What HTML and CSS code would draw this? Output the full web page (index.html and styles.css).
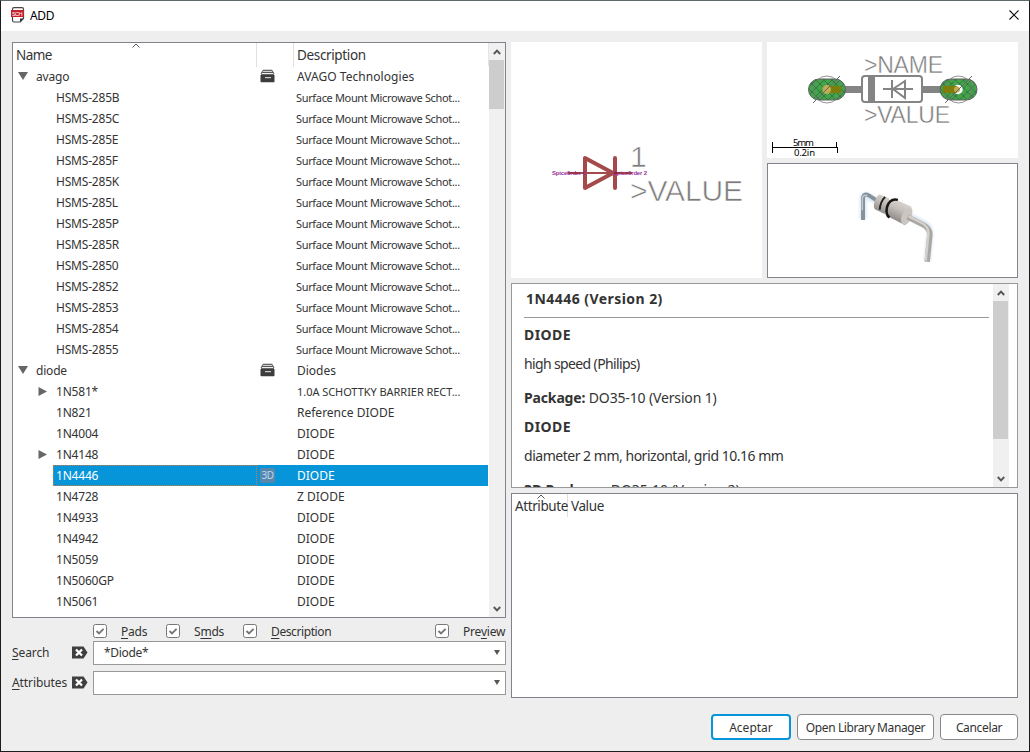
FILE: index.html
```html
<!DOCTYPE html>
<html lang="es">
<head>
<meta charset="utf-8">
<title>ADD</title>
<link rel="stylesheet" href="styles.css">
</head>
<body>
<svg class="defs" width="0" height="0">
  <defs>
    <symbol id="drawer" viewBox="0 0 15 14">
      <path d="M3 1.500h9" stroke="#666" stroke-width="1.600"/>
      <path d="M1.800 3.500h11.400M1 5.400h13" stroke="#555" stroke-width="1"/>
      <path d="M3 1.200L1 5M12 1.200l2 3.800" stroke="#555"/>
      <path d="M.5 6h14v6.500q0 .7-.7.7H1.200q-.7 0-.7-.7z" fill="#3c3c3c"/>
      <path d="M5 8.600h6" stroke="#ccc" stroke-width="1.200"/>
    </symbol>
    <symbol id="up" viewBox="0 0 8 6"><path d="M.8 5L4 1.600 7.200 5" fill="none" stroke="#555" stroke-width="1.900"/></symbol>
    <symbol id="down" viewBox="0 0 8 6"><path d="M.8 1L4 4.400 7.200 1" fill="none" stroke="#555" stroke-width="1.900"/></symbol>
    <symbol id="sort" viewBox="0 0 8 5"><path d="M.5 4.500L4 1l3.500 3.500" fill="none" stroke="#555" stroke-width="1"/></symbol>
    <symbol id="open" viewBox="0 0 10 8"><path d="M0 0h10L5 8z" fill="#666"/></symbol>
    <symbol id="closed" viewBox="0 0 9 9"><path d="M.5 0v9L9 4.500z" fill="#666"/></symbol>
    <symbol id="clear" viewBox="0 0 16 13"><path d="M0 .5h11.500L15.500 6.500l-4 6H0z" fill="#3f3f3f"/><path d="M4 3.500l6 6M10 3.500l-6 6" stroke="#fff" stroke-width="2.300"/></symbol>
    <symbol id="check" viewBox="0 0 14 14"><rect x=".5" y=".5" width="13" height="13" rx="2" fill="#fff" stroke="#777"/><path d="M3.500 7l2.500 2.500 4.600-4.700" fill="none" stroke="#777" stroke-width="1.900"/></symbol>
    <symbol id="arrow" viewBox="0 0 6 5"><path d="M0 0h6L3 5z" fill="#555"/></symbol>
    <pattern id="hatch" width="8" height="8" patternUnits="userSpaceOnUse"><path d="M0 0l8 8M8 0L0 8" stroke="#357447" stroke-width="1"/></pattern>
  </defs>
</svg>
<div class="window">
  <header class="titlebar">
    <svg class="app-icon" viewBox="0 0 14 16"><path d="M3 .7h8q1.500 0 1.500 1.500v9.300L9.300 15H3q-1.500 0-1.500-1.500V2.200Q1.500.7 3 .7z" fill="#fff" stroke="#444" stroke-width="1.200"/><path d="M9 15v-3.500h3.500z" fill="#333"/><rect x="0" y="3" width="13" height="7" fill="#c5222c"/><text x="1" y="8.800" class="sch" textLength="10.500">SCH</text></svg>
    <span class="title">ADD</span>
    <svg class="close" viewBox="0 0 10 10"><path d="M.5.5l9 9M9.500.5l-9 9" stroke="#111" stroke-width="1.100"/></svg>
  </header>
  <main class="content">
    <section class="left">
      <div class="library">
        <div class="tree">
          <div class="row head"><span class="name">Name<svg class="sort"><use href="#sort"/></svg></span><span class="kind"></span><span class="desc">Description</span></div>
          <div class="row lib"><span class="name"><svg class="open"><use href="#open"/></svg>avago</span><span class="kind"><svg class="drawer"><use href="#drawer"/></svg></span><span class="desc wide">AVAGO Technologies</span></div>
          <div class="row"><span class="name">HSMS-285B</span><span class="kind"></span><span class="desc small">Surface Mount Microwave Schot...</span></div>
          <div class="row"><span class="name">HSMS-285C</span><span class="kind"></span><span class="desc small">Surface Mount Microwave Schot...</span></div>
          <div class="row"><span class="name">HSMS-285E</span><span class="kind"></span><span class="desc small">Surface Mount Microwave Schot...</span></div>
          <div class="row"><span class="name">HSMS-285F</span><span class="kind"></span><span class="desc small">Surface Mount Microwave Schot...</span></div>
          <div class="row"><span class="name">HSMS-285K</span><span class="kind"></span><span class="desc small">Surface Mount Microwave Schot...</span></div>
          <div class="row"><span class="name">HSMS-285L</span><span class="kind"></span><span class="desc small">Surface Mount Microwave Schot...</span></div>
          <div class="row"><span class="name">HSMS-285P</span><span class="kind"></span><span class="desc small">Surface Mount Microwave Schot...</span></div>
          <div class="row"><span class="name">HSMS-285R</span><span class="kind"></span><span class="desc small">Surface Mount Microwave Schot...</span></div>
          <div class="row"><span class="name">HSMS-2850</span><span class="kind"></span><span class="desc small">Surface Mount Microwave Schot...</span></div>
          <div class="row"><span class="name">HSMS-2852</span><span class="kind"></span><span class="desc small">Surface Mount Microwave Schot...</span></div>
          <div class="row"><span class="name">HSMS-2853</span><span class="kind"></span><span class="desc small">Surface Mount Microwave Schot...</span></div>
          <div class="row"><span class="name">HSMS-2854</span><span class="kind"></span><span class="desc small">Surface Mount Microwave Schot...</span></div>
          <div class="row"><span class="name">HSMS-2855</span><span class="kind"></span><span class="desc small">Surface Mount Microwave Schot...</span></div>
          <div class="row lib"><span class="name"><svg class="open"><use href="#open"/></svg>diode</span><span class="kind"><svg class="drawer"><use href="#drawer"/></svg></span><span class="desc">Diodes</span></div>
          <div class="row group"><span class="name"><svg class="closed"><use href="#closed"/></svg>1N581*</span><span class="kind"></span><span class="desc caps">1.0A SCHOTTKY BARRIER RECT...</span></div>
          <div class="row"><span class="name">1N821</span><span class="kind"></span><span class="desc">Reference DIODE</span></div>
          <div class="row"><span class="name">1N4004</span><span class="kind"></span><span class="desc">DIODE</span></div>
          <div class="row group"><span class="name"><svg class="closed"><use href="#closed"/></svg>1N4148</span><span class="kind"></span><span class="desc">DIODE</span></div>
          <div class="row selected"><span class="name">1N4446</span><span class="kind"><b class="badge">3D</b></span><span class="desc">DIODE</span></div>
          <div class="row"><span class="name">1N4728</span><span class="kind"></span><span class="desc">Z DIODE</span></div>
          <div class="row"><span class="name">1N4933</span><span class="kind"></span><span class="desc">DIODE</span></div>
          <div class="row"><span class="name">1N4942</span><span class="kind"></span><span class="desc">DIODE</span></div>
          <div class="row"><span class="name">1N5059</span><span class="kind"></span><span class="desc">DIODE</span></div>
          <div class="row"><span class="name">1N5060GP</span><span class="kind"></span><span class="desc">DIODE</span></div>
          <div class="row"><span class="name">1N5061</span><span class="kind"></span><span class="desc">DIODE</span></div>
        </div>
        <div class="scrollbar"><svg><use href="#up"/></svg><i class="thumb"></i><svg class="end"><use href="#down"/></svg></div>
      </div>
      <div class="filters">
        <label class="f-pads"><svg class="check"><use href="#check"/></svg><span><u>P</u>ads</span></label>
        <label class="f-smds"><svg class="check"><use href="#check"/></svg><span>S<u>m</u>ds</span></label>
        <label class="f-desc"><svg class="check"><use href="#check"/></svg><span><u>D</u>escription</span></label>
        <label class="f-prev"><svg class="check"><use href="#check"/></svg><span>Pre<u>v</u>iew</span></label>
      </div>
      <div class="field"><span class="label"><u>S</u>earch</span><svg class="clear"><use href="#clear"/></svg><div class="combo">*Diode*<svg class="arrow"><use href="#arrow"/></svg></div></div>
      <div class="field"><span class="label"><u>A</u>ttributes</span><svg class="clear"><use href="#clear"/></svg><div class="combo"><svg class="arrow"><use href="#arrow"/></svg></div></div>
    </section>
    <section class="right">
      <div class="previews">
        <svg class="symbol" viewBox="511 42 251 236">
          <g fill="none" stroke="#a54a4a" stroke-width="4" stroke-linecap="round" stroke-linejoin="round"><path d="M585 158v30l28-15zM615 158v30"/></g>
          <path d="M586 173h27" stroke="#a54a4a" stroke-width="2"/>
          <text class="pin" x="552" y="175" textLength="34">Spice0rder 1</text>
          <text class="pin" x="613" y="175" textLength="34">Spice0rder 2</text>
          <path d="M568 173h16M614 173h18" stroke="#8b1a2a" stroke-width="1.700"/>
          <text class="cad big" x="630" y="167" textLength="17">1</text>
          <text class="cad big" x="630" y="201" textLength="113">&gt;VALUE</text>
        </svg>
        <div class="physical">
          <svg class="package" viewBox="767 42 251 116">
            <path d="M843 89.500h20M922 89.500h20" stroke="#848484" stroke-width="7"/>
            <g id="pad">
              <rect x="808.500" y="79" width="37" height="21" rx="10.500" fill="#43a547"/>
              <rect x="808.500" y="79" width="37" height="21" rx="10.500" fill="url(#hatch)" stroke="#606060"/>
              <circle cx="827" cy="89.500" r="13.500" fill="none" stroke="#777" stroke-width=".8"/>
            </g>
            <use href="#pad" x="131.500"/>
            <circle cx="827" cy="89.500" r="4.500" fill="#c1ad52"/><path d="M827 86h14v7h-14z" fill="#7f7e0a"/><circle cx="827.500" cy="89.500" r="3.500" fill="#c1ad52"/>
            <circle cx="958" cy="89.500" r="4.700" fill="#fff"/><path d="M943 86h14v7h-14z" fill="#7f7e0a"/><circle cx="957" cy="89.500" r="3" fill="#c1ad52"/>
            <path d="M813 103l27-27M945 103l27-27" stroke="#666"/>
            <g fill="none" stroke="#848484" stroke-width="2"><rect x="862" y="76" width="60" height="26" rx="3"/><path d="M883 89h30M892 80v18M905 81v17l-12-9z"/></g>
            <path d="M868 76h7v26h-7z" fill="#848484"/>
            <text class="cad name" x="864" y="73" textLength="79">&gt;NAME</text>
            <text class="cad name" x="864" y="123" textLength="86">&gt;VALUE</text>
            <path d="M772.500 142v11M836.500 142v5M837.500 147v6M772 147.500h66" stroke="#000" fill="none"/>
            <text class="scale" x="793" y="146" textLength="21">5mm</text>
            <text class="scale" x="794" y="156" textLength="21">0.2in</text>
          </svg>
          <svg class="model" viewBox="767 163 251 115">
            <defs>
              <linearGradient id="body" gradientUnits="userSpaceOnUse" x1="899" y1="199" x2="890" y2="218"><stop offset="0" stop-color="#dad6d2"/><stop offset=".45" stop-color="#c3beba"/><stop offset="1" stop-color="#8f8986"/></linearGradient>
              <filter id="halo" x="-20%" y="-20%" width="140%" height="140%"><feGaussianBlur stdDeviation="1"/></filter>
              <filter id="soft" x="-10%" y="-10%" width="120%" height="120%"><feGaussianBlur stdDeviation=".5"/></filter>
            </defs>
            <path d="M862.500 219v-20q0-6 6-2.500l42 20 15 8q5.500 3 5 10l-2.500 27" fill="none" stroke="#dce8f4" stroke-width="7" filter="url(#halo)"/>
            <g filter="url(#soft)" fill="none">
              <path d="M862.500 220v-21q0-7 6-4l7 4.500" stroke="#87919a" stroke-width="4"/>
              <path d="M861.800 210v-11q0-5 5-4" stroke="#c2c9d0" stroke-width="1.500"/>
              <path d="M879.500 194l10 4-5 16-10-5q-2-3 0-8 2-6 5-7z" fill="url(#body)"/>
              <path d="M894 198.500l17 7.500q3 3 1 10-2 7-7 9l-17-8.500q-3-3 0-10 2-7 6-8z" fill="url(#body)"/>
              <ellipse cx="906.800" cy="216.500" rx="4.800" ry="8.800" transform="rotate(23 906.800 216.500)" fill="#cbc6c2"/>
              <path d="M885 196.500q-5 5-5.500 13" stroke="#222" stroke-width="2"/>
              <path d="M898 199.500q-8-2-11 7-2 8 2.500 11" stroke="#151515" stroke-width="2.600"/>
              <path d="M908 217l15 7.500q8 4 7.500 11l-2.700 27" stroke="#aaa6a2" stroke-width="5.500"/>
              <path d="M909 216.300l14 7q6.500 4 6 11l-2.700 27" stroke="#d4d0cc" stroke-width="2.500"/>
            </g>
          </svg>
        </div>
      </div>
      <div class="details">
        <div class="doc">
          <h1>1N4446 (Version 2)</h1>
          <h2>DIODE</h2>
          <p class="p1">high speed (Philips)</p>
          <p class="p2"><b>Package:</b> DO35-10 (Version 1)</p>
          <h2 class="h2b">DIODE</h2>
          <p class="p3">diameter 2 mm, horizontal, grid 10.16 mm</p>
          <p class="p4"><b>3D Package:</b> DO35-10 (Version 2)</p>
        </div>
        <div class="scrollbar doc-scroll"><svg><use href="#up"/></svg><i class="thumb"></i><svg class="end"><use href="#down"/></svg></div>
      </div>
      <div class="attributes"><span class="attr">Attribute<svg class="sort"><use href="#sort"/></svg></span><span class="value">Value</span></div>
    </section>
  </main>
  <footer class="buttons"><button class="primary">Aceptar</button><button class="manager">Open Library Manager</button><button class="cancel">Cancelar</button></footer>
</div>
</body>
</html>
```
FILE: styles.css
```css
* { box-sizing: border-box; }
body { margin: 0; font: 12px/21px "Noto Sans", sans-serif; color: #333; }
svg { display: block; flex: none; }
.defs { position: absolute; }
.window { width: 1030px; height: 752px; display: flex; flex-direction: column; background: #eee; border: 1px solid #1c1c1c; border-top-color: #5f686b; overflow: hidden; }
.titlebar { height: 30px; flex: none; display: flex; align-items: center; background: #fff; padding: 0 10px 2px; color: #000; }
.app-icon { width: 14px; height: 16px; }
.sch { font: 5.500px "Liberation Sans", sans-serif; fill: #fff; }
.title { margin-left: 5px; letter-spacing: -.4px; }
.close { width: 10px; height: 10px; margin-left: auto; }
.content { display: grid; grid-template-columns: 494px 507px; gap: 5px; padding: 11px 11px 0; height: 667px; flex: none; }
.library { display: flex; height: 576px; border: 1px solid #7f838c; background: #fff; }
.tree { width: 476px; }
.row { display: grid; grid-template-columns: 204px 36px 1fr; height: 21px; padding-left: 40px; white-space: nowrap; }
.name { padding-left: 3px; letter-spacing: -.2px; }
.desc { padding-left: 4px; }
.small { font-size: 11px; padding-left: 3px; letter-spacing: -.34px; }
.caps { font-size: 11px; letter-spacing: -.05px; }
.wide { letter-spacing: .05px; }
.head { height: 23px; padding-left: 0; grid-template-columns: 244px 37px 1fr; font-size: 13.500px; line-height: 24px; border-right: 1px solid #e5e5e5; }
.head .name { position: relative; border-right: 1px solid #e0e0e0; letter-spacing: -.6px; }
.head .kind { border-right: 1px solid #e0e0e0; }
.head .desc { padding-left: 3px; letter-spacing: -.35px; }
.sort { position: absolute; top: 0; left: 119px; width: 8px; height: 5px; }
.lib { padding-left: 5px; grid-template-columns: 239px 36px 1fr; }
.lib .name, .group .name { display: flex; align-items: center; padding-left: 0; }
.open { width: 10px; height: 8px; margin: 0 8px 2px 0; }
.group { padding-left: 26px; grid-template-columns: 218px 36px 1fr; }
.closed { width: 9px; height: 9px; margin: 0 9px 0 -1px; }
.kind { display: flex; align-items: center; }
.drawer { width: 15px; height: 14px; margin: 0 0 2px 3px; }
.selected { margin-left: 40px; padding-left: 0; background: #0795d9; color: #fff; margin-right: 1px; }
.selected .name { outline: 1px dotted #d5763f; outline-offset: -1px; }
.badge { width: 15px; height: 15px; margin-left: 3px; border-radius: 2px; background: #5787ac; color: #b9d9ef; font: 10px/15px "Noto Sans", sans-serif; text-align: center; letter-spacing: -.5px; }
.scrollbar { width: 16px; background: #f0f0f0; display: flex; flex-direction: column; align-items: center; padding: 6px 1px 5px 0; }
.scrollbar svg { width: 8px; height: 6px; }
.thumb { width: 15px; height: 49px; margin-top: 5px; background: #cdcdcd; }
.end { margin-top: auto; }
.filters { display: flex; height: 22px; padding: 3px 0 0 81px; }
.filters label { display: flex; height: 21px; align-items: center; }
.filters span { letter-spacing: -.2px; }
.check { width: 14px; height: 14px; margin: -2px 14px 0 0; }
.filters u, .label u { text-underline-offset: 2px; }
.f-pads { width: 73px; }
.f-smds { width: 77px; }
.f-desc { width: 192px; }
.filters .f-desc span { letter-spacing: -.4px; }
.f-prev { white-space: nowrap; }
.field { display: flex; align-items: center; height: 25px; margin-bottom: 5px; }
.label { width: 60px; white-space: nowrap; letter-spacing: -.1px; }
.clear { width: 16px; height: 13px; }
.combo { display: flex; align-items: center; margin-left: 5px; width: 413px; height: 24px; border: 1px solid #999; background: #fff; padding: 0 5px 0 10px; letter-spacing: -.3px; }
.arrow { width: 6px; height: 5px; margin-left: auto; }
.previews { display: flex; gap: 5px; height: 236px; }
.symbol { width: 251px; height: 236px; background: #fff; }
.physical { display: flex; flex-direction: column; gap: 5px; }
.package { width: 251px; height: 116px; background: #fff; }
.model { width: 251px; height: 115px; background: #fff; border: 1px solid #7f838c; }
.cad { font-family: "Liberation Sans", sans-serif; fill: #7c7c7c; stroke: #fff; stroke-width: .6px; }
.big { font-size: 30px; }
.name.cad { font-size: 23px; letter-spacing: 0; stroke-width: .4px; }
.pin { font: bold 6px "Liberation Sans", sans-serif; fill: #993399; }
.scale { font: 9.500px "Noto Sans", sans-serif; fill: #000; }
.details { display: flex; margin-top: 5px; height: 205px; border: 1px solid #999; background: #fff; overflow: hidden; }
.doc { width: 481px; padding: 0 4px 0 12px; font-size: 14px; line-height: 20px; overflow: hidden; white-space: nowrap; letter-spacing: -.15px; }
.doc h1, .doc h2 { margin: 0; font-size: 14px; letter-spacing: .45px; }
.doc p { margin: 0; }
.doc h1 { height: 34px; padding: 5px 2px; border-bottom: 1px solid #999; }
.doc h2 { margin-top: 7px; }
.doc .p1 { margin-top: 9px; letter-spacing: -.63px; }
.doc .p2 { margin-top: 14px; }
.doc .h2b { margin-top: 9px; }
.doc .p3 { margin-top: 9px; letter-spacing: -.48px; }
.doc .p4 { margin-top: 14px; letter-spacing: -.1px; }
.doc-scroll { padding-bottom: 5px; }
.doc-scroll .thumb { height: 138px; }
.attributes { display: flex; margin-top: 5px; height: 205px; border: 1px solid #7f838c; background: #fff; font-size: 13.500px; line-height: 24px; letter-spacing: -.4px; }
.attr { position: relative; width: 56px; height: 23px; padding-left: 3px; border-right: 1px solid #e0e0e0; }
.attr .sort { left: 25px; }
.value { padding-left: 3px; }
.buttons { display: flex; gap: 6px; padding: 16px 11px 0 710px; }
button { height: 26px; padding: 2px 0 0; background: #fff; border: 1px solid #888; border-radius: 4px; font: 12px/20px "Noto Sans", sans-serif; color: #333; }
.primary { width: 80px; border: 2px solid #0795d9; }
.manager { width: 137px; letter-spacing: -.4px; }
.cancel { width: 78px; letter-spacing: -.35px; }
```
